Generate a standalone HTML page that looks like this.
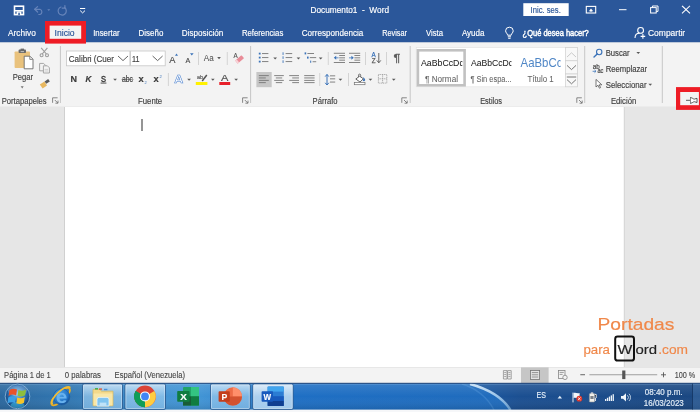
<!DOCTYPE html>
<html lang="es"><head><meta charset="utf-8"><title>Documento1 - Word</title>
<style>
html,body{margin:0;padding:0;background:#fff;}
body{width:700px;height:412px;overflow:hidden;font-family:'Liberation Sans',sans-serif;}
svg{display:block;}
svg text{font-family:'Liberation Sans',sans-serif;white-space:pre;}
svg{will-change:transform;}
</style></head><body>
<svg width="700" height="412" viewBox="0 0 700 412">
<rect x="0" y="0" width="700" height="412" fill="#E6E6E6"/>
<rect x="0" y="0" width="700" height="42.5" fill="#2B579A"/>
<rect x="0" y="42.5" width="700" height="64" fill="#F3F3F3"/>
<rect x="0" y="106.200" width="700" height="0.6" fill="#ECECEC"/>
<rect x="64.7" y="107" width="559.3" height="260.4" fill="#FFFFFF"/>
<rect x="64.2" y="107" width="0.8" height="260.4" fill="#C8C8C8"/>
<rect x="623.8" y="107" width="0.8" height="260.4" fill="#D0D0D0"/>
<rect x="141.1" y="119" width="1.8" height="12" fill="#8A8A8A"/>
<rect x="14.500" y="6.200" width="9" height="8.400" fill="none" stroke="#FFFFFF" stroke-width="1.600"/>
<rect x="14.500" y="10" width="9" height="1.500" fill="#FFFFFF"/>
<rect x="16.600" y="11.400" width="4.800" height="3.400" fill="#FFFFFF"/><rect x="18.300" y="12.700" width="1.500" height="2.400" fill="#2B579A"/>
<g fill="none" stroke="#6684BA" stroke-width="1.2" stroke-linecap="round" stroke-linejoin="round"><path d="M34.8 9.3h5.2a3 2.8 0 0 1 0 5.2h-1.2"/><path d="M37.6 6.6l-2.9 2.7 2.9 2.7"/></g>
<path d="M47.3 9.3h3l-1.5 1.8z" fill="#6684BA"/>
<g fill="none" stroke="#6684BA" stroke-width="1.2" stroke-linecap="round"><path d="M64.6 7.6a4.1 4.1 0 1 1 -3.6 -0.6"/><path d="M64.9 5.6v2.6h-2.6"/></g>
<rect x="80" y="8" width="5.2" height="1" fill="#FFFFFF"/><path d="M80.200 10.600l2.400 2.300 2.400-2.300" fill="none" stroke="#FFFFFF" stroke-width="1"/>
<text x="310.5" y="13.1" font-size="9" fill="#FFFFFF" stroke="#FFFFFF" stroke-width="0.16" textLength="78.5" lengthAdjust="spacingAndGlyphs" >Documento1  -  Word</text>
<rect x="523.3" y="3.2" width="45.4" height="12.8" fill="#FFFFFF"/>
<text x="530.6" y="12.6" font-size="8.5" fill="#2B579A" stroke="#2B579A" stroke-width="0.16" textLength="30.2" lengthAdjust="spacingAndGlyphs" >Inic. ses.</text>
<rect x="586.3" y="6.4" width="9.4" height="6.6" fill="none" stroke="#FFFFFF" stroke-width="1.1"/>
<path d="M588.8 11.2l2.2-2.6 2.2 2.6z" fill="#FFFFFF"/><rect x="590.5" y="10" width="1" height="2" fill="#FFFFFF"/>
<rect x="619" y="9.2" width="7.5" height="1" fill="#FFFFFF"/>
<g fill="none" stroke="#FFFFFF" stroke-width="1"><rect x="650.6" y="7.6" width="5.6" height="5.4"/><path d="M652.4 7.6v-1.6h5.6v5.4h-1.8"/></g>
<g stroke="#FFFFFF" stroke-width="1.1" stroke-linecap="square"><path d="M682.4 6.2l7.2 6.8"/><path d="M689.6 6.2l-7.2 6.8"/></g>
<rect x="45" y="21" width="41" height="22.6" fill="#EE1C25"/>
<rect x="49.6" y="25.6" width="31.6" height="13.2" fill="#F3F3F3"/>
<text x="8.0" y="35.6" font-size="9" fill="#FFFFFF" stroke="#FFFFFF" stroke-width="0.16" textLength="27.8" lengthAdjust="spacingAndGlyphs" >Archivo</text>
<text x="54.6" y="35.6" font-size="9" fill="#2B579A" stroke="#2B579A" stroke-width="0.16" textLength="20.0" lengthAdjust="spacingAndGlyphs" >Inicio</text>
<text x="93.2" y="35.6" font-size="9" fill="#FFFFFF" stroke="#FFFFFF" stroke-width="0.16" textLength="26.4" lengthAdjust="spacingAndGlyphs" >Insertar</text>
<text x="138.6" y="35.6" font-size="9" fill="#FFFFFF" stroke="#FFFFFF" stroke-width="0.16" textLength="24.7" lengthAdjust="spacingAndGlyphs" >Diseño</text>
<text x="181.8" y="35.6" font-size="9" fill="#FFFFFF" stroke="#FFFFFF" stroke-width="0.16" textLength="41.5" lengthAdjust="spacingAndGlyphs" >Disposición</text>
<text x="241.9" y="35.6" font-size="9" fill="#FFFFFF" stroke="#FFFFFF" stroke-width="0.16" textLength="41.4" lengthAdjust="spacingAndGlyphs" >Referencias</text>
<text x="301.7" y="35.6" font-size="9" fill="#FFFFFF" stroke="#FFFFFF" stroke-width="0.16" textLength="61.6" lengthAdjust="spacingAndGlyphs" >Correspondencia</text>
<text x="382.2" y="35.6" font-size="9" fill="#FFFFFF" stroke="#FFFFFF" stroke-width="0.16" textLength="24.8" lengthAdjust="spacingAndGlyphs" >Revisar</text>
<text x="425.9" y="35.6" font-size="9" fill="#FFFFFF" stroke="#FFFFFF" stroke-width="0.16" textLength="17.1" lengthAdjust="spacingAndGlyphs" >Vista</text>
<text x="461.9" y="35.6" font-size="9" fill="#FFFFFF" stroke="#FFFFFF" stroke-width="0.16" textLength="22.5" lengthAdjust="spacingAndGlyphs" >Ayuda</text>
<text x="522.6" y="35.6" font-size="9" fill="#FFFFFF" stroke="#FFFFFF" stroke-width="0.45" textLength="66.2" lengthAdjust="spacingAndGlyphs" >¿Qué desea hacer?</text>
<text x="648.0" y="35.6" font-size="9" fill="#FFFFFF" stroke="#FFFFFF" stroke-width="0.16" textLength="37.2" lengthAdjust="spacingAndGlyphs" >Compartir</text>
<g fill="none" stroke="#FFFFFF" stroke-width="1"><path d="M507.6 35.2c0-1.6-2-2.4-2-4.4a3.8 3.6 0 0 1 7.6 0c0 2-2 2.8-2 4.4z"/><path d="M507.8 36.8h3.2M508.2 38.3h2.4"/></g>
<g fill="none" stroke="#FFFFFF" stroke-width="1.1"><circle cx="640.6" cy="30.4" r="2.9"/><path d="M635 38c0-3.2 2-4.8 4.4-4.8"/><path d="M640.6 36.4h4.6M642.9 34.1v4.6"/></g>
<rect x="59.9" y="46" width="1" height="57" fill="#C6C6C6"/>
<rect x="250.1" y="46" width="1" height="57" fill="#C6C6C6"/>
<rect x="409.7" y="46" width="1" height="57" fill="#C6C6C6"/>
<rect x="584.2" y="46" width="1" height="57" fill="#C6C6C6"/>
<rect x="661.8" y="46" width="1" height="57" fill="#C6C6C6"/>
<rect x="14.6" y="51.4" width="15.4" height="16.6" rx="0.8" fill="#E9C27D"/>
<rect x="18.6" y="49.6" width="7.4" height="3.4" rx="0.8" fill="#6B6B6B"/><rect x="20.6" y="48.6" width="3.4" height="2" fill="#6B6B6B"/><rect x="20.600" y="51.300" width="3.400" height="0.800" fill="#D8D8D8"/>
<path d="M24.2 56.2h5.8l3 3v9.6h-8.8z" fill="#FFFFFF" stroke="#6B6B6B" stroke-width="0.9"/><path d="M29.8 56.4v3h3" fill="none" stroke="#6B6B6B" stroke-width="0.8"/>
<text x="12.7" y="80.0" font-size="8.5" fill="#424242" stroke="#424242" stroke-width="0.16" textLength="20.3" lengthAdjust="spacingAndGlyphs" >Pegar</text>
<path d="M20.7 86.3h3l-1.5 2.1z" fill="#777"/>
<g fill="none" stroke="#9C9C9C" stroke-width="1.100"><path d="M41.2 47.8l5.2 6.2M47.4 47.8l-5.2 6.2"/><circle cx="41.6" cy="55.2" r="1.5"/><circle cx="47" cy="55.2" r="1.5"/></g>
<g fill="#F3F3F3" stroke="#A6A6A6" stroke-width="1"><path d="M39.6 63.4h4l2 2v5.4h-6z"/><path d="M43.4 65.8h4l2 2v5.2h-6z"/></g><path d="M44.6 69.4h3.4M44.6 71h3.4" stroke="#B8B8B8" stroke-width="0.6"/>
<path d="M39.8 84.6l4.6-3 2.6 4-4.4 2.8z" fill="#E8B860"/><path d="M44.6 81.4l3.6-2.4 1.6 2.4-3.6 2.4z" fill="#5A5A5A"/>
<text x="1.7" y="103.5" font-size="8.5" fill="#424242" stroke="#424242" stroke-width="0.16" textLength="45.0" lengthAdjust="spacingAndGlyphs" >Portapapeles</text>
<g fill="none" stroke="#6A6A6A" stroke-width="0.8"><path d="M52.6 102.8v-5h5"/><path d="M54.800000000000004 100.0l3 3M58.0 100.6v2.6h-2.6"/></g>
<rect x="66.5" y="51" width="63.4" height="14.8" fill="#FFF" stroke="#C6C6C6" stroke-width="0.8"/>
<rect x="130.6" y="51" width="34.6" height="14.8" fill="#FFF" stroke="#C6C6C6" stroke-width="0.8"/>
<text x="68.8" y="62.0" font-size="8.5" fill="#424242" stroke="#424242" stroke-width="0.16" textLength="45.2" lengthAdjust="spacingAndGlyphs" >Calibri (Cuer</text>
<text x="132.0" y="62.0" font-size="8.5" fill="#424242" stroke="#424242" stroke-width="0.16" textLength="7.5" lengthAdjust="spacingAndGlyphs" >11</text>
<g fill="none" stroke="#555" stroke-width="0.9"><path d="M118 56l5 4.6 5-4.6"/><path d="M152.6 56l5 4.6 5-4.6"/></g>
<text x="169.3" y="62.5" font-size="9.6" fill="#424242" stroke="#424242" stroke-width="0.1" textLength="6.2" lengthAdjust="spacingAndGlyphs" >A</text>
<path d="M175 55.700l1.500-2.200 1.500 2.200z" fill="#3B73B9"/>
<text x="185.4" y="62.5" font-size="7.6" fill="#424242" stroke="#424242" stroke-width="0.1" textLength="4.8" lengthAdjust="spacingAndGlyphs" >A</text>
<path d="M190 53.200h3.600l-1.800 2.200z" fill="#3B73B9"/>
<rect x="198.0" y="52" width="0.9" height="13" fill="#D0D0D0"/>
<text x="203.8" y="61.3" font-size="9" fill="#4A4A4A" textLength="10.0" lengthAdjust="spacingAndGlyphs" >Aa</text>
<path d="M217.2 57.1h3.7l-1.85 2.1z" fill="#5A5A5A"/>
<rect x="226.79999999999998" y="52" width="0.9" height="13" fill="#D0D0D0"/>
<text x="233.6" y="58.3" font-size="6.6" fill="#555" stroke="#555" stroke-width="0.15" textLength="4.2" lengthAdjust="spacingAndGlyphs" >A</text>
<g transform="rotate(-40 239.600 59.400)"><rect x="235.400" y="57.400" width="8.400" height="4" rx="0.6" fill="#E98C98"/><rect x="235.400" y="57.400" width="2" height="4" rx="0.5" fill="#F7D3D8"/></g>
<text x="70.5" y="82.0" font-size="8.8" fill="#3A3A3A" stroke="#3A3A3A" stroke-width="0.16" font-weight="bold" textLength="6.5" lengthAdjust="spacingAndGlyphs" >N</text>
<text x="85.5" y="82.0" font-size="8.8" fill="#3A3A3A" stroke="#3A3A3A" stroke-width="0.16" font-weight="bold" font-style="italic" textLength="5.9" lengthAdjust="spacingAndGlyphs" >K</text>
<text x="101.0" y="81.6" font-size="8.6" fill="#3A3A3A" stroke="#3A3A3A" stroke-width="0.45" textLength="5.0" lengthAdjust="spacingAndGlyphs" >S</text>
<rect x="100.6" y="82.6" width="5.8" height="0.9" fill="#3A3A3A"/>
<path d="M113.2 78.7h3.7l-1.85 2.1z" fill="#5A5A5A"/>
<text x="122.0" y="81.8" font-size="8.4" fill="#3A3A3A" stroke="#3A3A3A" stroke-width="0.16" textLength="11.0" lengthAdjust="spacingAndGlyphs" >abc</text>
<rect x="121.600" y="79" width="11.800" height="0.600" fill="#3A3A3A" opacity="0.8"/>
<text x="138.4" y="82.0" font-size="9" fill="#3A3A3A" stroke="#3A3A3A" stroke-width="0.16" font-weight="bold" textLength="5.2" lengthAdjust="spacingAndGlyphs" >x</text>
<text x="144.4" y="84.0" font-size="4" fill="#3B73B9" textLength="2.2" lengthAdjust="spacingAndGlyphs" >2</text>
<text x="153.4" y="82.0" font-size="9" fill="#3A3A3A" stroke="#3A3A3A" stroke-width="0.16" font-weight="bold" textLength="5.2" lengthAdjust="spacingAndGlyphs" >x</text>
<text x="159.4" y="77.8" font-size="4" fill="#3B73B9" textLength="2.3" lengthAdjust="spacingAndGlyphs" >2</text>
<rect x="167.9" y="73" width="0.9" height="13" fill="#D0D0D0"/>
<text x="174.300" y="83.300" font-size="11.500" font-weight="bold" fill="#FFFFFF" stroke="#4C82D0" stroke-width="0.550" textLength="9" lengthAdjust="spacingAndGlyphs">A</text>
<path d="M187.2 78.7h3.7l-1.85 2.1z" fill="#5A5A5A"/>
<text x="197.0" y="79.0" font-size="6" fill="#555" stroke="#555" stroke-width="0.16" textLength="6.0" lengthAdjust="spacingAndGlyphs" >ab</text>
<path d="M201.6 80.6l4.6-6 1.2 1-4.6 6z" fill="#555"/>
<rect x="195.8" y="82" width="11.6" height="3" fill="#FFF100"/>
<path d="M211.0 78.7h3.7l-1.85 2.1z" fill="#5A5A5A"/>
<text x="221.0" y="81.0" font-size="9.5" fill="#4A4A4A" stroke="#4A4A4A" stroke-width="0.16" textLength="7.4" lengthAdjust="spacingAndGlyphs" >A</text>
<rect x="219.3" y="82" width="10.9" height="3" fill="#E8202A"/>
<path d="M234.3 78.7h3.7l-1.85 2.1z" fill="#5A5A5A"/>
<text x="138.0" y="103.5" font-size="8.5" fill="#424242" stroke="#424242" stroke-width="0.16" textLength="24.2" lengthAdjust="spacingAndGlyphs" >Fuente</text>
<g fill="none" stroke="#6A6A6A" stroke-width="0.8"><path d="M242.6 102.8v-5h5"/><path d="M244.79999999999998 100.0l3 3M248.0 100.6v2.6h-2.6"/></g>
<rect x="258.8" y="52.7" width="1.8" height="1.8" fill="#3B73B9"/><rect x="262" y="53.15" width="6.4" height="0.9" fill="#777777"/>
<rect x="258.8" y="56.7" width="1.8" height="1.8" fill="#3B73B9"/><rect x="262" y="57.15" width="6.4" height="0.9" fill="#777777"/>
<rect x="258.8" y="60.7" width="1.8" height="1.8" fill="#3B73B9"/><rect x="262" y="61.15" width="6.4" height="0.9" fill="#777777"/>
<path d="M273.3 57.5h3.7l-1.85 2.1z" fill="#5A5A5A"/>
<rect x="282.6" y="52.300000000000004" width="0.9" height="2.6" fill="#3B73B9"/><rect x="285.6" y="53.15" width="6.6" height="0.9" fill="#777777"/>
<rect x="282.6" y="56.300000000000004" width="0.9" height="2.6" fill="#3B73B9"/><rect x="285.6" y="57.15" width="6.6" height="0.9" fill="#777777"/>
<rect x="282.6" y="60.300000000000004" width="0.9" height="2.6" fill="#3B73B9"/><rect x="285.6" y="61.15" width="6.6" height="0.9" fill="#777777"/>
<path d="M296.6 57.5h3.7l-1.85 2.1z" fill="#5A5A5A"/>
<rect x="304.6" y="52.4" width="1.6" height="2" fill="#3B73B9"/><rect x="307.4" y="53.1" width="6.6" height="0.9" fill="#777777"/>
<rect x="307" y="56.6" width="1.6" height="2" fill="#3B73B9"/><rect x="309.8" y="57.2" width="6.4" height="0.9" fill="#777777"/>
<rect x="310.2" y="60.6" width="1" height="2.2" fill="#3B73B9"/><rect x="312.6" y="61.3" width="3.6" height="0.9" fill="#777777"/>
<path d="M318.8 57.5h3.7l-1.85 2.1z" fill="#5A5A5A"/>
<rect x="327.8" y="52" width="0.9" height="13" fill="#D0D0D0"/>
<rect x="333.8" y="52.8" width="11.2" height="0.9" fill="#777777"/><rect x="333.8" y="62" width="11.2" height="0.9" fill="#777777"/>
<rect x="339.2" y="55.1" width="5.8" height="0.9" fill="#777777"/>
<rect x="339.2" y="57.4" width="5.8" height="0.9" fill="#777777"/>
<rect x="339.2" y="59.7" width="5.8" height="0.9" fill="#777777"/>
<path d="M338.6 57.4h-2.4v-1.6l-2.4 2 2.4 2v-1.6h2.4z" fill="#3B73B9"/>
<rect x="349" y="52.8" width="11.2" height="0.9" fill="#777777"/><rect x="349" y="62" width="11.2" height="0.9" fill="#777777"/>
<rect x="354.4" y="55.1" width="5.8" height="0.9" fill="#777777"/>
<rect x="354.4" y="57.4" width="5.8" height="0.9" fill="#777777"/>
<rect x="354.4" y="59.7" width="5.8" height="0.9" fill="#777777"/>
<path d="M349 57.4h2.4v-1.6l2.4 2-2.4 2v-1.6h-2.4z" fill="#3B73B9"/>
<rect x="365.0" y="52" width="0.9" height="13" fill="#D0D0D0"/>
<text x="371.6" y="57.4" font-size="6.6" fill="#3B73B9" stroke="#3B73B9" stroke-width="0.25" textLength="4.2" lengthAdjust="spacingAndGlyphs" >A</text>
<text x="371.8" y="63.0" font-size="6.4" fill="#5A5A5A" stroke="#5A5A5A" stroke-width="0.25" textLength="3.8" lengthAdjust="spacingAndGlyphs" >Z</text>
<path d="M378.8 53v9.6M376.8 60.4l2 2.4 2-2.4" fill="none" stroke="#555" stroke-width="0.9"/>
<rect x="386.1" y="52" width="0.9" height="13" fill="#D0D0D0"/>
<text x="393.6" y="62.2" font-size="10.5" fill="#5C5C5C" stroke="#5C5C5C" stroke-width="0.3" textLength="6.8" lengthAdjust="spacingAndGlyphs" >¶</text>
<rect x="256.4" y="72" width="15.3" height="15.2" fill="#C6C6C6"/>
<rect x="258.8" y="75.2" width="10" height="0.9" fill="#777777"/>
<rect x="258.8" y="77.5" width="7" height="0.9" fill="#777777"/>
<rect x="258.8" y="79.9" width="10" height="0.9" fill="#777777"/>
<rect x="258.8" y="82.2" width="7" height="0.9" fill="#777777"/>
<rect x="274.2" y="75.2" width="9.6" height="0.9" fill="#777777"/>
<rect x="275.8" y="77.5" width="6.4" height="0.9" fill="#777777"/>
<rect x="274.2" y="79.9" width="9.6" height="0.9" fill="#777777"/>
<rect x="275.8" y="82.2" width="6.4" height="0.9" fill="#777777"/>
<rect x="289.2" y="75.2" width="9.8" height="0.9" fill="#777777"/>
<rect x="292.2" y="77.5" width="6.8" height="0.9" fill="#777777"/>
<rect x="289.2" y="79.9" width="9.8" height="0.9" fill="#777777"/>
<rect x="292.2" y="82.2" width="6.8" height="0.9" fill="#777777"/>
<rect x="304.2" y="75.2" width="10.4" height="0.9" fill="#777777"/>
<rect x="304.2" y="77.5" width="10.4" height="0.9" fill="#777777"/>
<rect x="304.2" y="79.9" width="10.4" height="0.9" fill="#777777"/>
<rect x="304.2" y="82.2" width="10.4" height="0.9" fill="#777777"/>
<rect x="319.3" y="73" width="0.9" height="13" fill="#D0D0D0"/>
<path d="M327 74.6v10.2M325.2 76.6l1.8-2.2 1.8 2.2M325.2 82.8l1.8 2.2 1.8-2.2" fill="none" stroke="#3B73B9" stroke-width="1"/>
<rect x="330" y="75.4" width="5.2" height="0.9" fill="#777777"/>
<rect x="330" y="78.4" width="5.2" height="0.9" fill="#777777"/>
<rect x="330" y="81.6" width="5.2" height="0.9" fill="#777777"/>
<path d="M338.6 78.7h3.7l-1.85 2.1z" fill="#5A5A5A"/>
<rect x="348.0" y="73" width="0.9" height="13" fill="#D0D0D0"/>
<path d="M358.500 77.600v-2.400a1.100 1.100 0 0 1 2.200 0v2.800" fill="none" stroke="#555" stroke-width="0.8"/>
<path d="M355.800 79l3.800-2.800 3.800 2.600-3.400 3.200z" fill="#FFF" stroke="#555" stroke-width="0.9" stroke-linejoin="round"/>
<path d="M363.300 77c1.300 1.200 1.900 2.300 1.900 3.100a1.300 1.300 0 0 1-2.400 0.500c0.600-0.900 0.700-2.200 0.500-3.600z" fill="#3B73B9"/>
<rect x="354.300" y="82.500" width="10.700" height="2.200" fill="#FFF" stroke="#707070" stroke-width="0.7"/>
<path d="M368.6 78.7h3.7l-1.85 2.1z" fill="#5A5A5A"/>
<g stroke="#A2A2A2" stroke-width="0.9" stroke-dasharray="1.100 0.700" fill="none"><rect x="378.400" y="74.500" width="8.400" height="8.600"/><path d="M382.600 74.500v8.600M378.400 78.800h8.400"/></g>
<path d="M391.9 78.7h3.7l-1.85 2.1z" fill="#5A5A5A"/>
<text x="312.6" y="103.5" font-size="8.5" fill="#424242" stroke="#424242" stroke-width="0.16" textLength="24.9" lengthAdjust="spacingAndGlyphs" >Párrafo</text>
<g fill="none" stroke="#6A6A6A" stroke-width="0.8"><path d="M401.8 102.8v-5h5"/><path d="M404.0 100.0l3 3M407.2 100.6v2.6h-2.6"/></g>
<rect x="416.200" y="47.600" width="161.200" height="39.200" fill="#FFF" stroke="#E2E2E2" stroke-width="0.600"/>
<rect x="417.900" y="50.300" width="46.700" height="35" fill="#FFF" stroke="#C1C1C1" stroke-width="2.600"/>
<clipPath id="c1"><rect x="418" y="52" width="44.300" height="18"/></clipPath><clipPath id="c2"><rect x="466" y="52" width="45.400" height="18"/></clipPath>
<text x="421.0" y="65.9" font-size="9.4" fill="#1E1E1E" stroke="#1E1E1E" stroke-width="0.05" textLength="42.8" lengthAdjust="spacingAndGlyphs" clip-path="url(#c1)">AaBbCcDc</text>
<text x="425.0" y="82.0" font-size="8.5" fill="#646464" stroke="#646464" stroke-width="0.05" textLength="33.0" lengthAdjust="spacingAndGlyphs" >¶ Normal</text>
<text x="470.9" y="65.9" font-size="9.4" fill="#1E1E1E" stroke="#1E1E1E" stroke-width="0.05" textLength="42.1" lengthAdjust="spacingAndGlyphs" clip-path="url(#c2)">AaBbCcDc</text>
<text x="470.4" y="82.0" font-size="8.5" fill="#646464" stroke="#646464" stroke-width="0.05" textLength="41.3" lengthAdjust="spacingAndGlyphs" >¶ Sin espa...</text>
<clipPath id="ct"><rect x="515" y="50" width="45.6" height="22"/></clipPath>
<g clip-path="url(#ct)"><text x="520.600" y="66.700" font-size="12.400" fill="#4F86C6" textLength="41.800" lengthAdjust="spacingAndGlyphs">AaBbCc</text></g>
<text x="527.4" y="82.0" font-size="8.5" fill="#646464" stroke="#646464" stroke-width="0.05" textLength="26.3" lengthAdjust="spacingAndGlyphs" >Título 1</text>
<rect x="565.6" y="47.6" width="11.8" height="13.2" fill="#F8F8F8" stroke="#CFCFCF" stroke-width="0.7"/>
<rect x="565.6" y="60.8" width="11.8" height="13.2" fill="#F8F8F8" stroke="#CFCFCF" stroke-width="0.7"/>
<rect x="565.6" y="74" width="11.8" height="12.8" fill="#F8F8F8" stroke="#CFCFCF" stroke-width="0.7"/>
<path d="M567 57l4.5-4.2 4.5 4.2" fill="none" stroke="#C4C4C4" stroke-width="0.9"/>
<path d="M567 65.4l4.5 4.2 4.5-4.2" fill="none" stroke="#666" stroke-width="0.9"/>
<path d="M567 79.6l4.5 4.2 4.5-4.2M566.8 77h9.4" fill="none" stroke="#666" stroke-width="0.9"/>
<text x="480.2" y="103.5" font-size="8.5" fill="#424242" stroke="#424242" stroke-width="0.16" textLength="21.8" lengthAdjust="spacingAndGlyphs" >Estilos</text>
<g fill="none" stroke="#6A6A6A" stroke-width="0.8"><path d="M576.8 102.8v-5h5"/><path d="M579.0 100.0l3 3M582.1999999999999 100.6v2.6h-2.6"/></g>
<circle cx="599.2" cy="52" r="2.7" fill="none" stroke="#3B73B9" stroke-width="1.1"/><path d="M597.2 54l-3.2 3" stroke="#3B73B9" stroke-width="1.4" stroke-linecap="round"/>
<text x="605.7" y="56.3" font-size="8.5" fill="#424242" stroke="#424242" stroke-width="0.16" textLength="24.0" lengthAdjust="spacingAndGlyphs" >Buscar</text>
<path d="M636.4 51.9h3.7l-1.85 2.1z" fill="#5A5A5A"/>
<text x="592.7" y="68.5" font-size="7.2" fill="#484848" stroke="#484848" stroke-width="0.2" textLength="7.0" lengthAdjust="spacingAndGlyphs" >ab</text>
<text x="597.4" y="73.2" font-size="6.8" fill="#484848" stroke="#484848" stroke-width="0.2" textLength="6.0" lengthAdjust="spacingAndGlyphs" >ac</text>
<path d="M592.600 71.300h3.200M594.500 69.900l1.500 1.400-1.500 1.400" fill="none" stroke="#3B73B9" stroke-width="0.8"/>
<text x="605.7" y="72.2" font-size="8.5" fill="#424242" stroke="#424242" stroke-width="0.16" textLength="41.5" lengthAdjust="spacingAndGlyphs" >Reemplazar</text>
<path d="M596 79.4v7.6l2-1.8 1.4 3 1.2-0.6-1.4-2.8h2.6z" fill="#FFF" stroke="#555" stroke-width="0.8" stroke-linejoin="round"/>
<text x="605.7" y="87.7" font-size="8.5" fill="#424242" stroke="#424242" stroke-width="0.16" textLength="40.9" lengthAdjust="spacingAndGlyphs" >Seleccionar</text>
<path d="M648.4 83.7h3.7l-1.85 2.1z" fill="#5A5A5A"/>
<text x="610.9" y="103.5" font-size="8.5" fill="#424242" stroke="#424242" stroke-width="0.16" textLength="25.4" lengthAdjust="spacingAndGlyphs" >Edición</text>
<rect x="676" y="87.1" width="24" height="22.8" fill="#EE1C25"/>
<rect x="680.2" y="92" width="18.7" height="13.2" fill="#F3F3F3"/>
<g fill="none" stroke="#4A4A4A" stroke-width="0.9"><path d="M686 100.300h4.400"/><path d="M690.500 97.200v6.400"/><path d="M690.700 97.700C692.600 97.700 693 99.100 694.400 99.100L697 98.300V102.500L694.400 101.700C693 101.700 692.600 103.100 690.700 103.100" fill="#FFF"/></g>
<text x="597.5" y="330.4" font-size="16.4" fill="#F0884A" stroke="#F0884A" stroke-width="0.16" textLength="76.9" lengthAdjust="spacingAndGlyphs" >Portadas</text>
<text x="583.4" y="353.7" font-size="12.6" fill="#F0884A" stroke="#F0884A" stroke-width="0.16" textLength="26.6" lengthAdjust="spacingAndGlyphs" >para</text>
<rect x="615.2" y="336.6" width="18.8" height="24" rx="2.4" fill="none" stroke="#111" stroke-width="2"/>
<text x="617.4" y="353.7" font-size="12.6" fill="#222" stroke="#222" stroke-width="0.16" textLength="14.8" lengthAdjust="spacingAndGlyphs" >W</text>
<text x="635.4" y="353.7" font-size="12.6" fill="#222" stroke="#222" stroke-width="0.16" textLength="21.6" lengthAdjust="spacingAndGlyphs" >ord</text>
<text x="658.2" y="353.7" font-size="12.6" fill="#F0884A" stroke="#F0884A" stroke-width="0.16" textLength="29.8" lengthAdjust="spacingAndGlyphs" >.com</text>
<rect x="0" y="367.4" width="700" height="15.6" fill="#F3F3F3"/>
<rect x="0" y="367.2" width="700" height="0.6" fill="#E0E0E0"/>
<text x="4.1" y="378.0" font-size="8.3" fill="#464646" stroke="#464646" stroke-width="0.12" textLength="46.6" lengthAdjust="spacingAndGlyphs" >Página 1 de 1</text>
<text x="64.8" y="378.0" font-size="8.3" fill="#464646" stroke="#464646" stroke-width="0.12" textLength="36.2" lengthAdjust="spacingAndGlyphs" >0 palabras</text>
<text x="114.6" y="378.0" font-size="8.3" fill="#464646" stroke="#464646" stroke-width="0.12" textLength="70.4" lengthAdjust="spacingAndGlyphs" >Español (Venezuela)</text>
<text x="674.7" y="378.0" font-size="8.3" fill="#464646" stroke="#464646" stroke-width="0.12" textLength="20.6" lengthAdjust="spacingAndGlyphs" >100 %</text>
<g fill="none" stroke="#8C8C8C" stroke-width="0.8"><path d="M503.4 370.6h3.6v8.4h-3.6zM507.6 370.6h3.6v8.4h-3.6z"/><path d="M504.2 372.6h2M504.2 374.6h2M504.2 376.6h2M508.4 372.6h2M508.4 374.6h2M508.4 376.6h2"/></g>
<rect x="521" y="367.4" width="27.6" height="15.6" fill="#C6C6C6"/>
<rect x="530.4" y="370.4" width="9.2" height="9" fill="#E4E4E4" stroke="#767676" stroke-width="0.8"/><path d="M531.8 372.6h6.4M531.8 374.8h6.4M531.8 377h6.4" stroke="#7E7E7E" stroke-width="0.8"/>
<g fill="none" stroke="#858585" stroke-width="0.8"><rect x="558.4" y="370.4" width="6.6" height="8"/><path d="M559.6 372.4h4.2M559.6 374.4h3"/><circle cx="565" cy="377.4" r="2.2" fill="#F3F3F3"/></g>
<rect x="580.3" y="374.3" width="4.7" height="0.9" fill="#555"/>
<rect x="589.4" y="374.4" width="67.8" height="0.8" fill="#8A8A8A"/>
<rect x="622.2" y="370.5" width="3.2" height="8.6" fill="#555"/>
<path d="M661 374.8h5M663.5 372.3v5" stroke="#555" stroke-width="0.9"/>
<defs>
<linearGradient id="tb" x1="0" x2="1" y1="0" y2="0">
<stop offset="0" stop-color="#2B689F"/><stop offset="0.1" stop-color="#3177B2"/><stop offset="0.2" stop-color="#3F90D0"/><stop offset="0.28" stop-color="#4396D6"/><stop offset="0.42" stop-color="#1E6FC4"/><stop offset="0.72" stop-color="#1F6BBC"/><stop offset="1" stop-color="#1F6BBC"/>
</linearGradient>
<linearGradient id="tbv" x1="0" x2="0" y1="0" y2="1"><stop offset="0" stop-color="#FFF" stop-opacity="0.12"/><stop offset="0.5" stop-color="#FFF" stop-opacity="0"/><stop offset="1" stop-color="#000" stop-opacity="0.12"/></linearGradient>
<linearGradient id="btn" x1="0" x2="0" y1="0" y2="1"><stop offset="0" stop-color="#D4E9F9" stop-opacity="0.85"/><stop offset="0.5" stop-color="#9BCBEE" stop-opacity="0.7"/><stop offset="1" stop-color="#86BFEA" stop-opacity="0.75"/></linearGradient>
<linearGradient id="btna" x1="0" x2="0" y1="0" y2="1"><stop offset="0" stop-color="#E6F2FC" stop-opacity="0.95"/><stop offset="0.5" stop-color="#BBD9F2" stop-opacity="0.9"/><stop offset="1" stop-color="#B2D6F2" stop-opacity="0.9"/></linearGradient>
<radialGradient id="orb" cx="0.5" cy="0.4" r="0.6"><stop offset="0" stop-color="#7CC2EE"/><stop offset="0.55" stop-color="#2A6FB4"/><stop offset="1" stop-color="#103A6C"/></radialGradient>
<linearGradient id="tbr" x1="0" x2="1" y1="0" y2="0"><stop offset="0" stop-color="#1B5AA4"/><stop offset="0.22" stop-color="#1B4F91"/><stop offset="1" stop-color="#1A4781"/></linearGradient>
<linearGradient id="sw" x1="0" x2="0" y1="0" y2="1"><stop offset="0" stop-color="#D4E9FA" stop-opacity="0.95"/><stop offset="1" stop-color="#8FC2EC" stop-opacity="0.7"/></linearGradient>
<radialGradient id="ie" cx="0.4" cy="0.35" r="0.7"><stop offset="0" stop-color="#4FA3E6"/><stop offset="0.7" stop-color="#2273C6"/><stop offset="1" stop-color="#154A88"/></radialGradient>
</defs>
<rect x="0" y="383" width="700" height="27" fill="url(#tb)"/>
<path d="M470 383C488 388 503 398 511 410H700V383z" fill="url(#tbr)"/>
<path d="M470 384C488 389 503 398 510.500 410" fill="none" stroke="url(#sw)" stroke-width="2.4"/>
<path d="M462 384C476 388 488 398 494 410" fill="none" stroke="#6FB0EA" stroke-opacity="0.25" stroke-width="1.6"/>
<rect x="0" y="383" width="700" height="27" fill="url(#tbv)"/>
<rect x="0" y="382.800" width="700" height="1" fill="#1B3F70"/>
<rect x="0" y="383.800" width="700" height="0.7" fill="#9CC4E8" opacity="0.45"/>
<rect x="0" y="409.600" width="700" height="2.400" fill="#F6F7F9"/>
<circle cx="17.500" cy="396.400" r="12.300" fill="url(#orb)" stroke="#A9D0EE" stroke-width="0.9" stroke-opacity="0.75"/>
<ellipse cx="17.500" cy="390.600" rx="9.600" ry="5.400" fill="#FFF" opacity="0.22"/>
<ellipse cx="17.500" cy="405" rx="7" ry="3" fill="#45D0F5" opacity="0.45"/>
<g transform="translate(17.500 396.400) rotate(-6) scale(1.150) translate(-16.800 -396.800)"><path d="M10.400 390.600c2.200-1.200 4.400-1.200 6.600 0.200l-1.300 5c-2.200-1.300-4.400-1.300-6.600-0.200z" fill="#E8532B"/><path d="M18.200 391.300c2.200 1.300 4.400 1.300 6.600 0.200l-1.300 5c-2.200 1.100-4.400 1.100-6.600-0.200z" fill="#8DBE3C"/><path d="M8.700 397c2.200-1.200 4.400-1.200 6.600 0.200l-1.300 5c-2.200-1.300-4.400-1.300-6.600-0.200z" fill="#3AA0E6"/><path d="M16.500 397.700c2.200 1.300 4.400 1.300 6.600 0.200l-1.300 5c-2.200 1.100-4.400 1.100-6.600-0.200z" fill="#F5C52B"/></g>
<ellipse cx="60.600" cy="396.600" rx="12" ry="4.400" transform="rotate(-42 60.600 396.600)" fill="none" stroke="#E9AE25" stroke-width="1.700"/>
<circle cx="61.600" cy="396.800" r="8.200" fill="url(#ie)" stroke="#1B5FA6" stroke-width="0.7"/>
<text x="55.8" y="402.8" font-size="18" fill="#69B2EE" font-weight="bold" textLength="11.6" lengthAdjust="spacingAndGlyphs" >e</text>
<path d="M52.200 403.400A12 4.400 -42 0 1 69.800 387.200" fill="none" stroke="#F2BC35" stroke-width="1.700" stroke-linecap="round"/>
<rect x="82.6" y="384" width="39.9" height="25.4" rx="1.2" fill="url(#btn)" stroke="#1D4E86" stroke-width="0.8"/>
<rect x="83.5" y="384.9" width="38.1" height="23.6" rx="1" fill="none" stroke="#E4F1FB" stroke-opacity="0.7" stroke-width="0.7"/>
<path d="M93 389.4h7l1.4 1.8h11.6v14.6h-20z" fill="#F3D98B" stroke="#D9B75A" stroke-width="0.7"/>
<rect x="95" y="388" width="3" height="1.6" fill="#4CAF50"/><rect x="99" y="388.4" width="3" height="1.4" fill="#E05A3A"/><rect x="104" y="388.8" width="3.4" height="1.4" fill="#4A90D9"/>
<path d="M93.6 393.4h18.8v12h-18.8z" fill="#F8E7A8"/>
<path d="M97 406v-6.6a2 2 0 0 1 2-2h8a2 2 0 0 1 2 2v6.600z" fill="#7FC4F0" stroke="#E8F4FC" stroke-width="0.8"/><rect x="99.6" y="402.6" width="6.8" height="3.4" fill="#BFE2F8"/>
<rect x="125" y="384" width="40.5" height="25.4" rx="1.2" fill="url(#btn)" stroke="#1D4E86" stroke-width="0.8"/>
<rect x="125.9" y="384.9" width="38.7" height="23.6" rx="1" fill="none" stroke="#E4F1FB" stroke-opacity="0.7" stroke-width="0.7"/>
<circle cx="145" cy="396.4" r="10.8" fill="#DB4437"/>
<path d="M145 396.4L135.65 401.80A10.8 10.8 0 0 0 154.35 401.80z" fill="#0F9D58" transform="rotate(60 145 396.4)"/>
<path d="M145 396.4L154.35 391.00A10.8 10.8 0 0 1 145.00 407.20z" fill="#FFCD40"/>
<path d="M145 396.4L145.00 407.20A10.8 10.8 0 0 1 135.65 391.00z" fill="#0F9D58"/>
<circle cx="145" cy="396.4" r="5" fill="#FFF"/><circle cx="145" cy="396.4" r="3.9" fill="#4285F4"/>
<rect x="183" y="387" width="16" height="18.6" rx="1" fill="#21A366"/><rect x="183" y="396.3" width="8" height="9.3" fill="#185C37"/><rect x="191" y="387" width="8" height="9.3" fill="#33C481"/><rect x="191" y="396.3" width="8" height="9.3" fill="#107C41"/>
<rect x="177.2" y="391" width="12.4" height="10.8" rx="0.8" fill="#107C41"/>
<text x="180.2" y="399.8" font-size="9" fill="#FFF" stroke="#FFF" stroke-width="0.16" font-weight="bold" textLength="6.6" lengthAdjust="spacingAndGlyphs" >X</text>
<rect x="210.5" y="384" width="39.7" height="25.4" rx="1.2" fill="url(#btn)" stroke="#1D4E86" stroke-width="0.8"/>
<rect x="211.4" y="384.9" width="37.9" height="23.6" rx="1" fill="none" stroke="#E4F1FB" stroke-opacity="0.7" stroke-width="0.7"/>
<circle cx="232.8" cy="396.4" r="9.2" fill="#ED6C47"/><path d="M232.8 387.2a9.2 9.2 0 0 1 9.200 9.200h-9.200z" fill="#FF8F6B"/><path d="M223.6 396.4h18.400a9.200 9.200 0 0 1-18.400 0z" fill="#D35230"/>
<rect x="218.6" y="391.2" width="11.200" height="10.6" rx="0.8" fill="#C43E1C"/>
<text x="221.4" y="399.8" font-size="9" fill="#FFF" stroke="#FFF" stroke-width="0.16" font-weight="bold" textLength="5.8" lengthAdjust="spacingAndGlyphs" >P</text>
<rect x="252.8" y="384" width="40.3" height="25.4" rx="1.2" fill="url(#btna)" stroke="#1D4E86" stroke-width="0.8"/>
<rect x="253.70000000000002" y="384.9" width="38.5" height="23.6" rx="1" fill="none" stroke="#E4F1FB" stroke-opacity="0.7" stroke-width="0.7"/>
<rect x="267.6" y="386.6" width="16.2" height="19.4" rx="1" fill="#2B7CD3"/><rect x="267.6" y="386.6" width="16.2" height="5" fill="#41A5EE"/><rect x="267.6" y="396.200" width="16.2" height="5" fill="#185ABD"/><rect x="267.6" y="401" width="16.2" height="5" fill="#103F91"/>
<rect x="261.6" y="391.2" width="11.400" height="10.600" rx="0.8" fill="#185ABD"/>
<text x="263.6" y="399.8" font-size="9" fill="#FFF" stroke="#FFF" stroke-width="0.16" font-weight="bold" textLength="7.6" lengthAdjust="spacingAndGlyphs" >W</text>
<text x="536.6" y="398.0" font-size="8.6" fill="#E4EEF8" stroke="#E4EEF8" stroke-width="0.16" textLength="9.4" lengthAdjust="spacingAndGlyphs" >ES</text>
<path d="M557.600 398.500l2.200-2.800 2.200 2.800z" fill="#E4EEF8"/>
<path d="M573 392.600v9.800" stroke="#E4EEF8" stroke-width="1"/><path d="M573.6 393c2-1 3.400 0.800 6 0v5c-2.600 0.800-4-1-6 0z" fill="#F2F6FA"/>
<circle cx="579.300" cy="398.700" r="2.900" fill="#E03A2E"/><path d="M578.100 397.500l2.400 2.400M580.500 397.500l-2.400 2.400" stroke="#FFF" stroke-width="0.8"/>
<rect x="589.400" y="393.600" width="5.200" height="8.400" rx="0.6" fill="#F2F2EC" stroke="#8A8F96" stroke-width="0.6"/><rect x="590.800" y="392.400" width="2.400" height="1.400" fill="#DDD"/><path d="M594.600 394.400h1.600v3.600M595.400 398v3" stroke="#E8E8E8" stroke-width="1"/><rect x="590.4" y="396" width="3.200" height="3" fill="#7A8088"/>
<rect x="605.0" y="399.0" width="1.300" height="2" fill="#EEF4FA"/>
<rect x="606.9" y="397.8" width="1.300" height="3.2" fill="#EEF4FA"/>
<rect x="608.8" y="396.6" width="1.300" height="4.4" fill="#EEF4FA"/>
<rect x="610.7" y="395.4" width="1.300" height="5.6" fill="#EEF4FA"/>
<rect x="612.6" y="394.2" width="1.300" height="6.8" fill="#EEF4FA"/>
<path d="M621 396h2l3-2.800v8.400l-3-2.800h-2z" fill="#EEF4FA"/><path d="M627.400 395.200a3 3 0 0 1 0 4.400M629 393.800a5 5 0 0 1 0 7.200" fill="none" stroke="#DCE8F4" stroke-width="0.8"/>
<text x="644.8" y="395.4" font-size="8.6" fill="#E4EEF8" stroke="#E4EEF8" stroke-width="0.16" textLength="37.8" lengthAdjust="spacingAndGlyphs" >08:40 p.m.</text>
<text x="643.8" y="406.2" font-size="8.6" fill="#E4EEF8" stroke="#E4EEF8" stroke-width="0.16" textLength="40.0" lengthAdjust="spacingAndGlyphs" >16/03/2023</text>
<rect x="692.300" y="383.600" width="7.700" height="26" fill="#5C8FC4" opacity="0.28"/><rect x="692" y="383.600" width="0.7" height="26" fill="#0F2F5A"/>
</svg>
</body></html>
